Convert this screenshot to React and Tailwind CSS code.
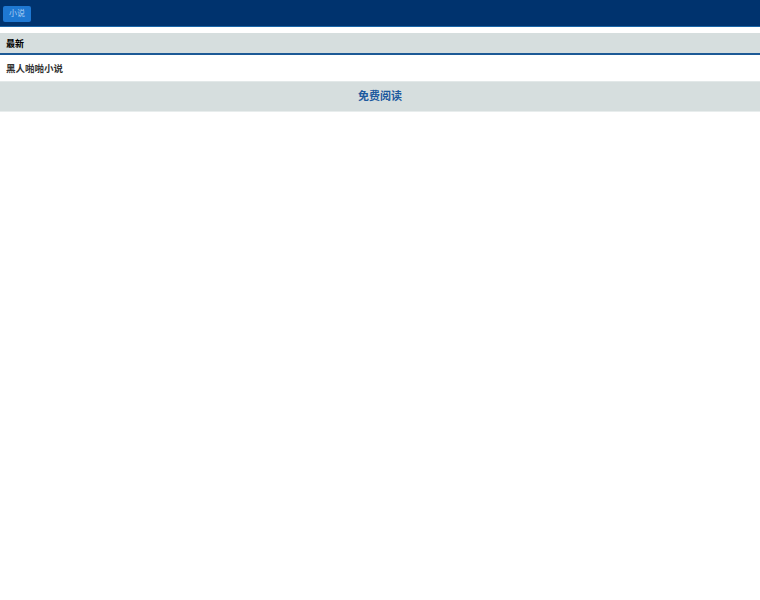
export default function App() {
  return (
    <div
      className="min-h-[600px] bg-white"
      style={{ fontFamily: '"Liberation Sans", Arial, "Noto Sans CJK SC", sans-serif' }}
    >
      <div className="h-[27px] bg-[#00336e] border-b border-[#1a66a8] flex items-start px-[3px] pt-[6px]">
        <a
          href="#"
          className="h-[16px] w-[28px] rounded-[2px] bg-[#1e78d2] text-[#a9cdf2] text-[8px] leading-[16px] text-center"
        >
          小说
        </a>
      </div>

      <div className="mt-[6px] h-[22px] bg-[#d6dede] border-b-2 border-[#1d5a96] px-[6px] pt-[3px] flex items-center">
        <span className="text-[9px] font-bold text-black">最新</span>
      </div>

      <div className="h-[27px] px-[6px] pt-[2px] flex items-center border-b border-[#e2e8e8]">
        <a href="#" className="text-[9.5px] font-bold text-[#333]">
          黑人啪啪小说
        </a>
      </div>

      <div className="h-[30px] bg-[#d6dede] border-b border-[#e8eded] flex items-center justify-center">
        <a href="#" className="text-[11px] font-bold text-[#1d5a9e]">
          免费阅读
        </a>
      </div>
    </div>
  );
}
